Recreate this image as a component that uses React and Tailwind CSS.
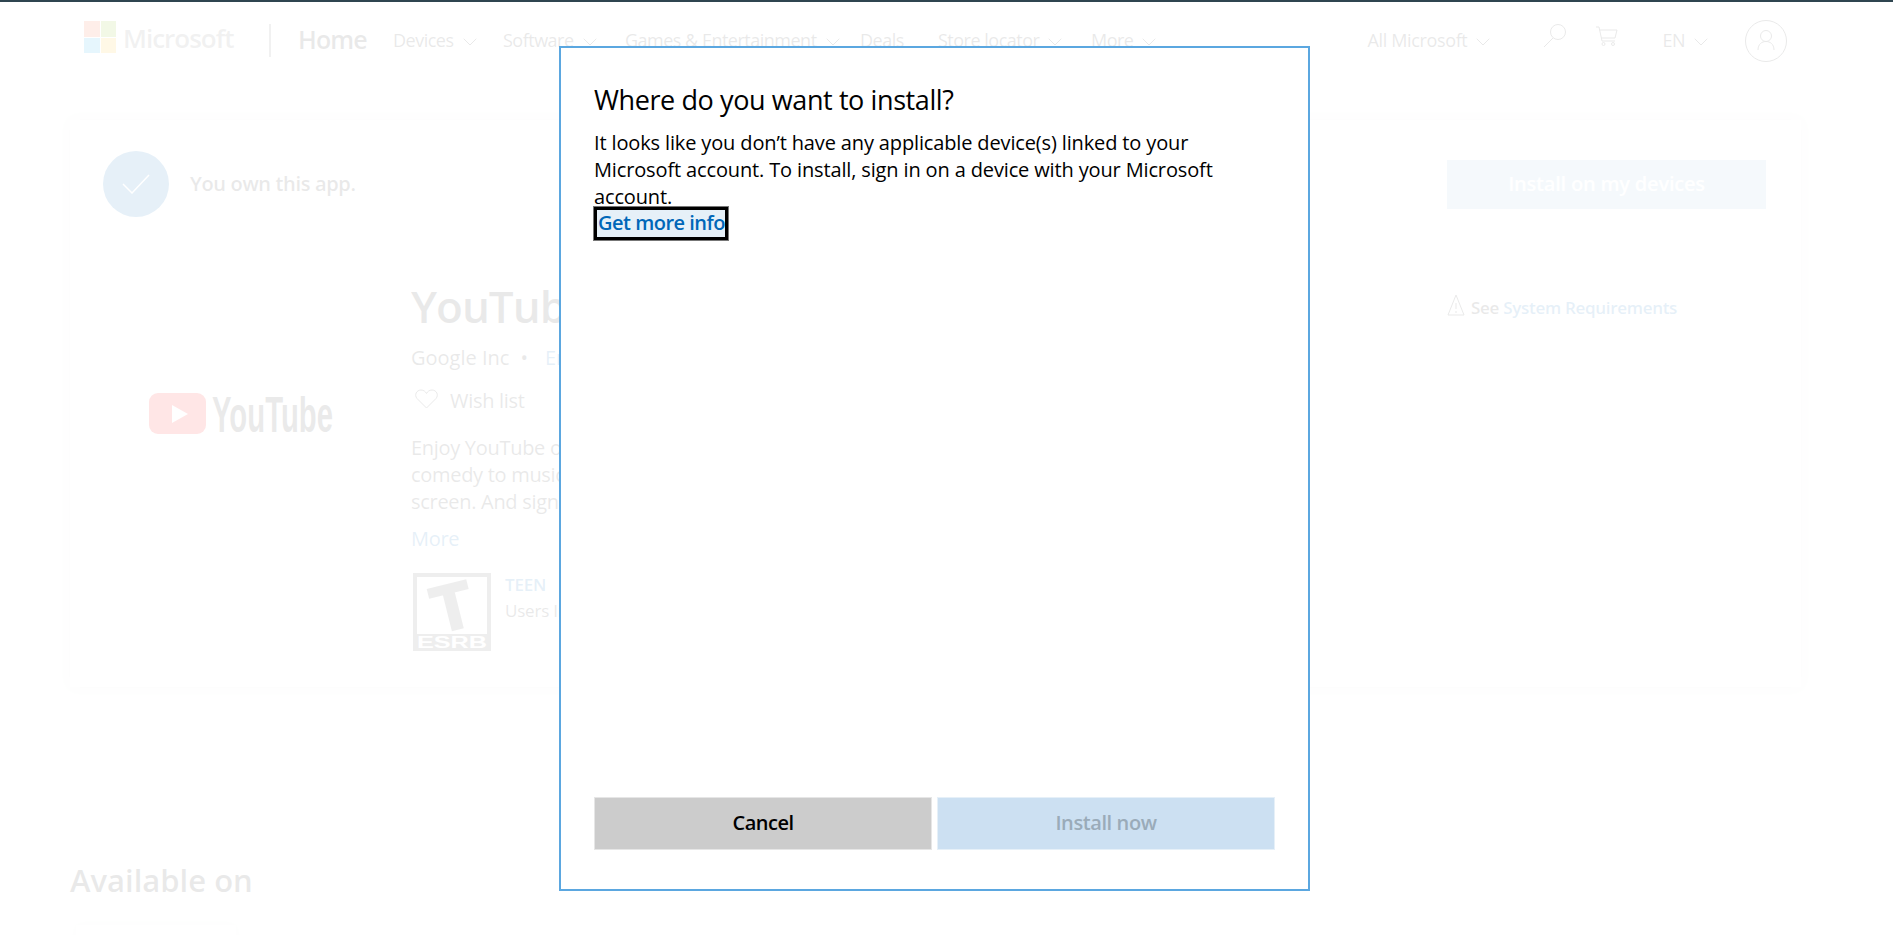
import React from 'react';
import { ChevronDown } from 'lucide-react';

const navItems = [
    { label: 'Devices', width: 'w-[110px]', chevron: true },
    { label: 'Software', width: 'w-[122px]', chevron: true },
    { label: 'Games & Entertainment', width: 'w-[235px]', chevron: true },
    { label: 'Deals', width: 'w-[78px]', chevron: false },
    { label: 'Store locator', width: 'w-[153px]', chevron: true },
    { label: 'More', width: 'w-[80px]', chevron: true },
];

const Chevron = () => <ChevronDown size={24} strokeWidth={1} className="ml-[4px] mt-[3px] -mr-[6px]" />;

const MicrosoftLogo = () => (
    <div className="grid grid-cols-2 gap-[1px] w-[32px] h-[32px] -mt-[7px]">
        <div className="bg-[#f25022]"></div>
        <div className="bg-[#7fba00]"></div>
        <div className="bg-[#00a4ef]"></div>
        <div className="bg-[#ffb900]"></div>
    </div>
);

const YouTubeLogo = () => (
    <svg width="186" height="44" viewBox="0 0 186 44">
        <rect x="0" y="0" width="57" height="41" rx="9" fill="#ff0000" />
        <polygon points="23,12 39,21 23,30" fill="#fff" />
        <text x="63" y="39" fontFamily="Liberation Sans" fontWeight="700" fontSize="50" textLength="121" lengthAdjust="spacingAndGlyphs" fill="#282828">YouTube</text>
    </svg>
);

const EsrbBadge = () => (
    <svg width="78" height="78" viewBox="0 0 78 78">
        <rect x="0" y="0" width="78" height="78" fill="#555" />
        <rect x="4" y="4" width="70" height="57" fill="#fff" />
        <text x="39" y="56" textAnchor="middle" fontFamily="Liberation Sans" fontWeight="700" fontSize="64" stroke="#555" strokeWidth="3" fill="#555" transform="rotate(-14 39 33)">T</text>
        <text x="39" y="75" textAnchor="middle" fontFamily="Liberation Sans" fontWeight="700" fontSize="16" textLength="70" lengthAdjust="spacingAndGlyphs" fill="#fff">ESRB</text>
    </svg>
);

const App = () => {
    return (
        <div className="relative h-[935px] overflow-hidden bg-white font-['Open_Sans',sans-serif] text-[#262626]">
            <div className="relative z-10 h-[2px] bg-[#2f4550]"></div>

            <header className="flex items-center h-[77px] pl-[84px] pr-[106px] text-[18px]">
                <MicrosoftLogo />
                <span className="ml-[7px] -mt-[5px] w-[146px] text-[26px] font-semibold tracking-[-1px] text-[#737373]">Microsoft</span>
                <div className="w-[2px] h-[33px] bg-[#737373]"></div>
                <span className="ml-[27px] -mt-[1px] w-[95px] text-[25px] font-semibold tracking-[-0.9px]">Home</span>
                <nav className="flex">
                    {navItems.map(item => (
                        <div key={item.label} className={`flex items-center ${item.width} tracking-[-0.5px]`}>
                            <span className="whitespace-nowrap">{item.label}</span>
                            {item.chevron && <Chevron />}
                        </div>
                    ))}
                </nav>
                <div className="flex items-center ml-auto tracking-[-0.35px]">
                    <span>All Microsoft</span>
                    <Chevron />
                </div>
                <svg className="ml-[54px] mb-[12px]" width="24" height="24" viewBox="0 0 24 24" fill="none" stroke="currentColor" strokeWidth="1">
                    <circle cx="15" cy="9" r="7.5" />
                    <path d="M10 15 L1 24" />
                </svg>
                <svg className="ml-[29px] mb-[8px]" width="22" height="21" viewBox="0 0 22 21" fill="none" stroke="currentColor" strokeWidth="1">
                    <path d="M0 1 H3 L6 15 H19 M3.6 4 H21 L19 12 H5" />
                    <circle cx="7.5" cy="18" r="1.5" />
                    <circle cx="17" cy="18" r="1.5" />
                </svg>
                <div className="flex items-center ml-[44px] tracking-[-0.5px]">
                    <span>EN</span>
                    <Chevron />
                </div>
                <div className="flex items-center justify-center ml-[38px] w-[42px] h-[42px] rounded-full border border-[#262626]">
                    <svg width="22" height="24" viewBox="0 0 22 24" fill="none" stroke="currentColor" strokeWidth="1">
                        <circle cx="11" cy="7" r="5.5" />
                        <path d="M3 21 C3 15 7 12.5 11 12.5 C15 12.5 19 15 19 21" />
                    </svg>
                </div>
            </header>

            <main className="mx-[70px] mt-[41px] w-[1731px]">
                <div className="shadow-[0_0_14px_rgba(0,0,0,0.14)]">
                    <div className="flex items-center justify-between h-[118px] pt-[10px] pl-[33px] pr-[35px]">
                        <div className="flex items-center">
                            <div className="flex items-center justify-center w-[66px] h-[66px] rounded-full bg-[#0067b8]">
                                <svg width="28" height="20" viewBox="0 0 28 20" fill="none" stroke="#fff" strokeWidth="1.5">
                                    <path d="M1 10 L10 19 L27 1" />
                                </svg>
                            </div>
                            <span className="ml-[21px] text-[20px] font-semibold tracking-[-0.35px]">You own this app.</span>
                        </div>
                        <div className="flex items-center justify-center w-[319px] h-[49px] bg-[#9bc3e1] text-[20px] font-semibold tracking-[-0.2px] text-white">Install on my devices</div>
                    </div>

                    <div className="flex h-[449px]">
                        <div className="w-[341px] pl-[79px] pt-[155px]">
                            <YouTubeLogo />
                        </div>
                        <div className="w-[1036px] pt-[33px] overflow-hidden">
                            <h1 className="text-[44px] leading-[70px] font-semibold tracking-[-1px]">YouTube</h1>
                            <div className="flex items-center mt-[1px] h-[32px] text-[20px]">
                                <span>Google Inc</span>
                                <span className="ml-[11px] mr-[17px]">•</span>
                                <span className="text-[#0067b8]">Entertainment</span>
                            </div>
                            <div className="flex items-center mt-[11px] h-[32px] text-[20px] tracking-[-0.3px]">
                                <svg className="ml-[4px] mb-[4px]" width="23" height="20" viewBox="0 0 23 20" fill="none" stroke="currentColor" strokeWidth="1">
                                    <path d="M11.5 19 L2 9.5 C-1 6 1.5 1 6 1 C8.5 1 10.5 2.5 11.5 4.5 C12.5 2.5 14.5 1 17 1 C21.5 1 24 6 21 9.5 Z" />
                                </svg>
                                <span className="ml-[12px]">Wish list</span>
                            </div>
                            <p className="mt-[17px] w-[1000px] text-[20px] leading-[27px] tracking-[-0.3px]">
                                Enjoy YouTube on your device, from gaming to<br />
                                comedy to music and everything in between on the big<br />
                                screen. And sign in to see your subscriptions.
                            </p>
                            <div className="mt-[10px] text-[20px] leading-[27px] tracking-[-0.3px] text-[#0067b8]">More</div>
                            <div className="flex mt-[21px] ml-[2px]">
                                <EsrbBadge />
                                <div className="ml-[14px] -mt-[1px] text-[17px] leading-[26px] tracking-[-0.2px]">
                                    <div className="font-semibold text-[#0067b8]">TEEN</div>
                                    <div>Users Interact</div>
                                </div>
                            </div>
                        </div>
                        <div className="pt-[57px] flex items-start text-[17px] font-semibold tracking-[-0.3px]">
                            <svg className="-mt-[1px]" width="18" height="22" viewBox="0 0 18 22" fill="none" stroke="currentColor" strokeWidth="1">
                                <path d="M9 1 L17 21 H1 Z M9 9 V15 M9 17 V19" />
                            </svg>
                            <span className="ml-[6px]">See <span className="text-[#0067b8]">System Requirements</span></span>
                        </div>
                    </div>
                </div>

                <h2 className="mt-[172px] text-[31px] leading-[42px] font-semibold">Available on</h2>
                <div className="mt-[24px] ml-[6px] w-[160px] h-[80px] shadow-[0_0_10px_rgba(0,0,0,0.08)]"></div>
            </main>

            {/* white veil over the whole page, the dialog sits above it */}
            <div className="absolute inset-0 bg-white/90"></div>

            <div className="absolute left-[559px] top-[46px] flex flex-col w-[751px] h-[845px] border-2 border-[#5ba7e0] bg-white px-[33px] pt-[34px] pb-[39px] text-black">
                <h2 className="text-[27px] leading-[36px] tracking-[-0.4px]">Where do you want to install?</h2>
                <p className="mt-[11px] text-[20px] leading-[27px] tracking-[-0.14px]">
                    It looks like you don’t have any applicable device(s) linked to your<br />
                    Microsoft account. To install, sign in on a device with your Microsoft<br />
                    account.
                </p>
                <a className="self-start -mt-[3px] pl-[1px] h-[33px] border-[3px] border-black outline outline-1 outline-[#777] bg-[#e6f0f8] text-[20px] leading-[25px] font-semibold tracking-[-0.5px] text-[#0067b8]">Get more info</a>
                <div className="flex gap-[5px] mt-auto">
                    <button className="w-[338px] h-[53px] pb-[2px] border border-[#e6e6e6] bg-[#cccccc] text-[20px] font-semibold tracking-[-0.5px] text-black">Cancel</button>
                    <button className="w-[338px] h-[53px] pb-[2px] border border-[#e6f0f8] bg-[#cce0f2] text-[20px] font-semibold tracking-[-0.4px] text-[#9aabb9]">Install now</button>
                </div>
            </div>
        </div>
    );
};

export default App;
